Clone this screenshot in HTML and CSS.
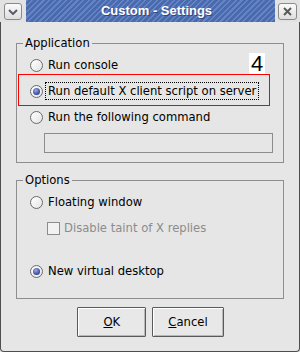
FILE: index.html
```html
<!DOCTYPE html>
<html lang="en">
<head>
    <meta charset="UTF-8">
    <title>Custom - Settings</title>
    <link rel="stylesheet" href="styles.css">
</head>
<body>

<div class="window">
    <!-- Title bar -->
    <div class="titlebar">
        <span class="tb-btn tb-menu">
            <svg width="10" height="6" viewBox="0 0 10 6"><polyline points="1,1 5,5 9,1" fill="none" stroke="#5a5a6e" stroke-width="2"/></svg>
        </span>
        <div class="tb-title">Custom - Settings</div>
        <span class="tb-btn tb-close">
            <svg width="9" height="9" viewBox="0 0 9 9"><path d="M1 1 L8 8 M8 1 L1 8" stroke="#5a5a5a" stroke-width="2"/></svg>
        </span>
    </div>

    <div class="client">
        <!-- Application group -->
        <fieldset class="group group-app">
            <legend>Application</legend>
            <div class="opt">
                <span class="radio"></span>
                <span class="label">Run console</span>
            </div>
            <div class="opt marked">
                <span class="radio on"></span>
                <span class="label focus">Run default X client script on server</span>
                <span class="mark-box"></span>
                <span class="mark-num">4</span>
            </div>
            <div class="opt">
                <span class="radio"></span>
                <span class="label">Run the following command</span>
            </div>
            <div class="entry"></div>
        </fieldset>

        <!-- Options group -->
        <fieldset class="group group-opts">
            <legend>Options</legend>
            <div class="opt">
                <span class="radio"></span>
                <span class="label">Floating window</span>
            </div>
            <div class="opt disabled">
                <span class="check"></span>
                <span class="label">Disable taint of X replies</span>
            </div>
            <div class="opt spaced">
                <span class="radio on"></span>
                <span class="label">New virtual desktop</span>
            </div>
        </fieldset>

        <div class="actions">
            <button class="btn"><u>O</u>K</button>
            <button class="btn"><u>C</u>ancel</button>
        </div>
    </div>
</div>

</body>
</html>
```

FILE: styles.css
```css
body {
    margin: 0;
    padding: 0;
    font-family: "DejaVu Sans", sans-serif;
    font-size: 11.6px;
    color: #000;
    background-color: #e6e6e6;
}

.window {
    width: 300px;
    height: 352px;
    display: flex;
    flex-direction: column;
    background-color: #e6e6e6;
}

/* Title bar */
.titlebar {
    height: 22px;
    display: flex;
    align-items: flex-start;
    padding: 0 3px 0 4px;
    background-color: #e2e2e2;
}

.tb-btn {
    width: 18px;
    height: 17px;
    margin-top: 3px;
    box-sizing: border-box;
    border: 1px solid #8a8a8a;
    border-radius: 3px;
    background: linear-gradient(#fbfbfb, #dedede);
    display: flex;
    align-items: center;
    justify-content: center;
}

.tb-menu {
    margin-right: 4px;
}

.tb-close {
    width: 19px;
    margin-left: 3px;
}

.tb-title {
    flex: 1;
    height: 22px;
    line-height: 22px;
    padding-left: 12px;
    text-align: center;
    font-family: "Liberation Sans", sans-serif;
    font-weight: bold;
    font-size: 13px;
    color: #fff;
    text-shadow: 1px 1px 0 #2f4680;
    background: repeating-linear-gradient(135deg, #6584c6 0 1.5px, #4a6aae 1.5px 4px);
}

/* Client area */
.client {
    flex: 1;
    padding-top: 14px;
    border: 1px solid #4e4e4e;
    border-top: none;
    border-radius: 0 0 4px 4px;
}

.group {
    margin: 0 15px;
    padding: 2px 0 9px 13px;
    border: 1px solid #8e8e8e;
    min-width: 0;
}

.group legend {
    padding: 0 2px;
    margin-left: -7px;
    line-height: 14px;
}

.group-opts {
    margin-top: 10px;
    padding-bottom: 14px;
}

.opt {
    height: 26px;
    display: flex;
    align-items: center;
    position: relative;
}

.opt.spaced {
    margin-top: 17px;
}

.label {
    border: 1px solid transparent;
    padding: 1px 2px;
    line-height: 14px;
    white-space: nowrap;
}

.label.focus {
    border: 1px dotted #000;
}

.radio {
    width: 13px;
    height: 13px;
    box-sizing: border-box;
    margin-right: 2px;
    border: 1px solid #6a6a6a;
    border-radius: 50%;
    background: linear-gradient(135deg, #ffffff, #e4e4e4);
    position: relative;
}

.radio.on::after {
    content: "";
    position: absolute;
    left: 2px;
    top: 2px;
    width: 7px;
    height: 7px;
    border-radius: 50%;
    background: radial-gradient(circle at 40% 35%, #9aaae6, #34449a 70%);
}

.check {
    width: 13px;
    height: 13px;
    box-sizing: border-box;
    margin-left: 17px;
    margin-right: 1px;
    border: 1px solid #8c8c8c;
    background-color: #f2f2f2;
}

.disabled .label {
    color: #8c8c8c;
}

.entry {
    height: 20px;
    box-sizing: border-box;
    margin: 3px 10px 0 14px;
    border: 1px solid #8c8c8c;
    background-color: #e6e6e6;
}

/* Annotation marker */
.mark-box {
    position: absolute;
    left: -12px;
    top: -4px;
    width: 252px;
    height: 32px;
    box-sizing: border-box;
    border: 1px solid #ff0000;
}

.mark-num {
    position: absolute;
    left: 219px;
    top: -25px;
    width: 16px;
    height: 21px;
    background-color: #fff;
    font-family: "Liberation Sans", sans-serif;
    font-size: 22px;
    line-height: 21px;
    text-align: center;
}

/* Buttons */
.actions {
    display: flex;
    justify-content: center;
    gap: 6px;
    margin-top: 8px;
    padding-left: 1px;
}

.btn {
    height: 30px;
    min-width: 69px;
    padding: 0 15px;
    font-family: "DejaVu Sans", sans-serif;
    font-size: 11.6px;
    color: #000;
    background-color: #e8e8e8;
    border: 1px solid #5a5a5a;
    border-radius: 1px;
    box-shadow: inset 1px 1px #ffffff, inset -1px -1px #b8b8b8;
}
```
